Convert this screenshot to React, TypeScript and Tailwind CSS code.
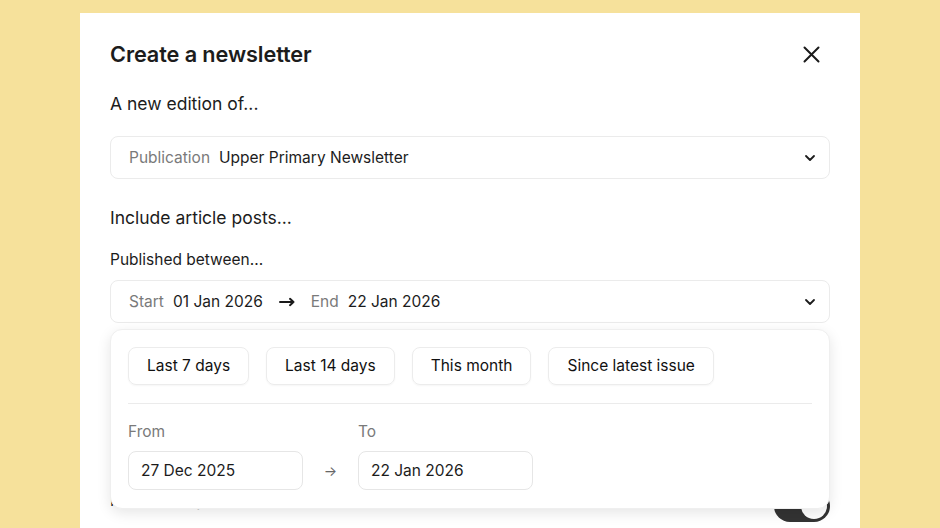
import React from "react";
import { ChevronDown } from "lucide-react";

const presets = ["Last 7 days", "Last 14 days", "This month", "Since latest issue"];

function CloseIcon() {
  return (
    <svg width="17" height="17" viewBox="0 0 17 17" fill="none" stroke="#1a1a1a" strokeWidth="2" strokeLinecap="round">
      <path d="M1.5 1.5 L15.5 15.5 M15.5 1.5 L1.5 15.5" />
    </svg>
  );
}

function LongArrow() {
  return (
    <svg width="16" height="10" viewBox="0 0 16 10" fill="none" stroke="#1a1a1a" strokeWidth="2" strokeLinecap="round" strokeLinejoin="round">
      <path d="M1 5 H14.5 M11 1.8 L14.5 5 L11 8.2" />
    </svg>
  );
}

export default function App() {
  return (
    <div
      className="h-[528px] w-full overflow-hidden bg-[#f6e19b] text-[#1c1c1c]"
      style={{ fontFamily: "Inter, 'Noto Sans', sans-serif" }}
    >
      <div className="mx-auto mt-[13px] w-[780px] min-h-[600px] bg-white px-[30px] pt-[28px]">
        {/* Header */}
        <div className="flex items-center justify-between">
          <h1 className="text-[21.7px] leading-[26px] font-semibold tracking-[-0.1px]">Create a newsletter</h1>
          <button className="mr-[10px] flex items-center justify-center">
            <CloseIcon />
          </button>
        </div>

        <p className="mt-[25px] text-[17.5px] leading-[24px]">A new edition of...</p>

        <div className="mt-[20px] flex h-[43px] items-center justify-between rounded-[8px] border border-[#ebebeb] pl-[18px] pr-[11px]">
          <div className="flex items-center gap-[9px] text-[15.5px]">
            <span className="text-[#7a7a7a]">Publication</span>
            <span>Upper Primary Newsletter</span>
          </div>
          <ChevronDown size={16} strokeWidth={2.75} />
        </div>

        <p className="mt-[27px] text-[17.5px] leading-[24px]">Include article posts...</p>
        <p className="mt-[19px] text-[15.5px] leading-[22px]">Published between...</p>

        {/* Date range select with open popover */}
        <div className="relative mt-[9px]">
          <div className="flex h-[43px] items-center justify-between rounded-[8px] border border-[#ebebeb] pl-[18px] pr-[11px]">
            <div className="flex items-center text-[15.5px]">
              <span className="text-[#7a7a7a]">Start</span>
              <span className="ml-[9px]">01 Jan 2026</span>
              <span className="ml-[16px] flex items-center">
                <LongArrow />
              </span>
              <span className="ml-[16px] text-[#7a7a7a]">End</span>
              <span className="ml-[9px]">22 Jan 2026</span>
            </div>
            <ChevronDown size={16} strokeWidth={2.75} />
          </div>

          <div className="absolute left-0 right-0 top-[calc(100%+6px)] z-10 rounded-[12px] border border-[#efefef] bg-white px-[17px] pt-[17px] pb-[18px] shadow-[0_4px_14px_rgba(0,0,0,0.10)]">
            <div className="flex gap-[17px]">
              {presets.map((p) => (
                <button
                  key={p}
                  className="h-[38px] rounded-[8px] border border-[#ececec] px-[18px] text-[15.5px] font-normal text-[#111] shadow-[0_1px_2px_rgba(0,0,0,0.04)]"
                >
                  {p}
                </button>
              ))}
            </div>
            <div className="mt-[18px] border-t border-[#ebebeb]" />
            <div className="mt-[18px] flex items-end">
              <div className="flex flex-col">
                <span className="text-[15.5px] leading-[20px] text-[#7a7a7a]">From</span>
                <div className="mt-[9px] flex h-[39px] w-[175px] items-center rounded-[8px] border border-[#e6e6e6] px-[12px] text-[15.5px]">
                  27 Dec 2025
                </div>
              </div>
              <span className="flex h-[39px] w-[55px] items-center justify-center text-[14px] text-[#666]">→</span>
              <div className="flex flex-col">
                <span className="text-[15.5px] leading-[20px] text-[#7a7a7a]">To</span>
                <div className="mt-[9px] flex h-[39px] w-[175px] items-center rounded-[8px] border border-[#e6e6e6] px-[12px] text-[15.5px]">
                  22 Jan 2026
                </div>
              </div>
            </div>
          </div>
        </div>

        {/* Content underneath the popover */}
        <div className="mt-[104px] flex h-[43px] items-center justify-between rounded-[8px] border border-[#ebebeb] pl-[18px] pr-[11px]">
          <span className="text-[15.5px] text-[#7a7a7a]">Order by</span>
          <ChevronDown size={16} strokeWidth={2.75} />
        </div>

        <div className="mt-[19px] flex items-center justify-between">
          <span className="mb-[10px] text-[15.5px]">Include images</span>
          <div className="flex h-[32px] w-[56px] items-center justify-end rounded-full bg-[#333] p-[3px]">
            <div className="h-[26px] w-[26px] rounded-full bg-white" />
          </div>
        </div>
      </div>
    </div>
  );
}
